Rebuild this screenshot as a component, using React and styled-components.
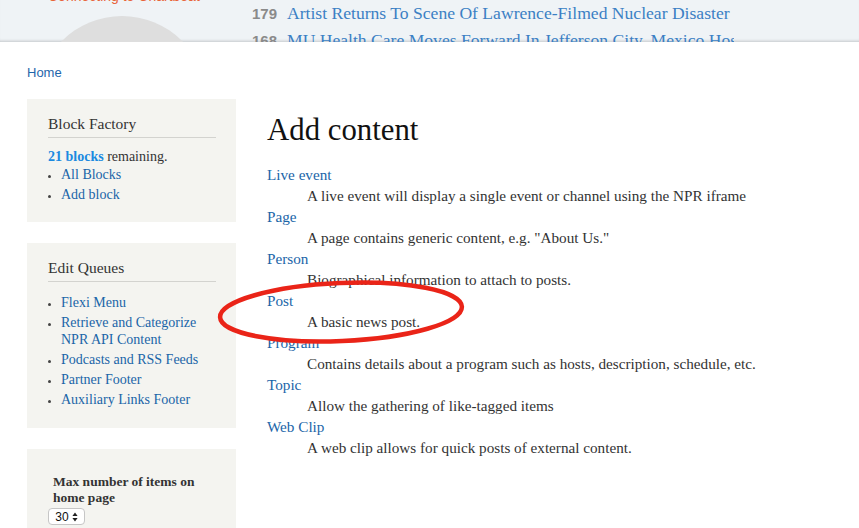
import React from "react";
import styled, { createGlobalStyle } from "styled-components";

const Global = createGlobalStyle`
  html, body { margin: 0; padding: 0; background: #fff; }
  body { font-family: "Liberation Serif", serif; width: 859px; height: 528px; overflow: hidden; }
  * { box-sizing: border-box; }
`;

const Page = styled.div`
  position: relative;
  width: 859px;
  height: 528px;
  overflow: hidden;
`;

const TopStrip = styled.div`
  position: relative;
  height: 42px;
  background: #eff3f6;
  overflow: hidden;
  display: flex;
  box-shadow: inset 0 -3px 3px -2px rgba(0,0,0,0.18);
`;

const LeftTop = styled.div`
  width: 252px;
  flex: none;
  position: relative;
`;

const Chartbeat = styled.div`
  position: absolute;
  left: 48px;
  top: -12px;
  font-family: "Liberation Sans", sans-serif;
  font-size: 14px;
  color: #e8643a;
`;

const Circle = styled.div`
  position: absolute;
  left: 37px;
  top: 16px;
  width: 170px;
  height: 170px;
  border-radius: 50%;
  background: #dedede;
`;

const Rows = styled.div`
  width: 482px;
  overflow: hidden;
  display: flex;
  flex-direction: column;
  padding-top: 3px;
  gap: 6px;
`;

const Row = styled.div`
  display: flex;
  align-items: baseline;
  white-space: nowrap;
  height: 22px;
`;

const Num = styled.span`
  font-family: "Liberation Sans", sans-serif;
  font-weight: bold;
  font-size: 15px;
  color: #8a8a8a;
  width: 35px;
  flex: none;
`;

const RowTitle = styled.span`
  font-family: "Liberation Serif", serif;
  font-size: 17.6px;
  color: #3b7fc4;
`;

const Main = styled.div`
  padding: 0 0 0 27px;
`;

const Crumb = styled.a`
  display: block;
  font-family: "Liberation Sans", sans-serif;
  font-size: 13px;
  color: #1f66ab;
  text-decoration: none;
  margin-top: 23px;
  line-height: 16px;
`;

const Columns = styled.div`
  display: flex;
  gap: 31px;
  margin-top: 18px;
`;

const Sidebar = styled.div`
  width: 209px;
  flex: none;
  display: flex;
  flex-direction: column;
  gap: 21px;
`;

const Block = styled.div`
  background: #f4f4f0;
  padding: ${p => p.$pad || "15px 20px 19px 21px"};
  color: #333;
`;

const BlockTitle = styled.h2`
  margin: 0;
  font-weight: normal;
  font-size: 15.5px;
  line-height: 20px;
  color: #333;
  padding-bottom: 3px;
  border-bottom: 1px solid #d3d3cf;
`;

const Remaining = styled.p`
  margin: 9px 0 0;
  font-size: 14px;
  line-height: 19px;
`;

const Strong = styled.strong`
  color: #1b8ae0;
`;

const List = styled.ul`
  margin: ${p => p.$mt || "0"} 0 0;
  padding-left: 13px;
  font-size: 14px;
  line-height: 17px;
`;

const Item = styled.li`
  margin-bottom: 3px;
  &::marker { color: #444; font-size: 11px; }
  &:last-child { margin-bottom: 0; }
`;

const Link = styled.a`
  color: #1a65a8;
  text-decoration: none;
`;

const Label = styled.div`
  font-weight: bold;
  font-size: 13.5px;
  line-height: 16px;
  color: #333;
  padding-left: 5px;
  padding-top: 19px;
`;

const Select = styled.div`
  margin-top: 2px;
  width: 37px;
  height: 17px;
  border: 1px solid #c6c6c6;
  border-radius: 4px;
  background: #fff;
  font-family: "Liberation Sans", sans-serif;
  font-size: 12px;
  display: flex;
  align-items: center;
  justify-content: center;
  gap: 3px;
  color: #111;
`;

const Content = styled.div`
  position: relative;
  flex: 1;
  padding-top: 13px;
`;

const H1 = styled.h1`
  margin: 0;
  font-weight: normal;
  font-size: 30.8px;
  line-height: 36px;
  color: #111;
`;

const DL = styled.dl`
  margin: 16px 0 0;
  font-size: 15.2px;
  line-height: 21px;
`;

const DT = styled.dt`
  color: #1a65a8;
`;

const DD = styled.dd`
  margin-left: 40px;
  color: #333;
`;

const Ellipse = styled.svg`
  position: absolute;
  left: 212px;
  top: 276px;
  pointer-events: none;
`;

const items = [
  ["Live event", "A live event will display a single event or channel using the NPR iframe"],
  ["Page", 'A page contains generic content, e.g. "About Us."'],
  ["Person", "Biographical information to attach to posts."],
  ["Post", "A basic news post."],
  ["Program", "Contains details about a program such as hosts, description, schedule, etc."],
  ["Topic", "Allow the gathering of like-tagged items"],
  ["Web Clip", "A web clip allows for quick posts of external content."],
];

export default function App() {
  return (
    <Page>
      <Global />
      <TopStrip>
        <LeftTop>
          <Chartbeat>Connecting to Chartbeat</Chartbeat>
          <Circle />
        </LeftTop>
        <Rows>
          <Row><Num>179</Num><RowTitle>Artist Returns To Scene Of Lawrence-Filmed Nuclear Disaster In Kansas</RowTitle></Row>
          <Row><Num>168</Num><RowTitle>MU Health Care Moves Forward In Jefferson City, Mexico Hospital Deals</RowTitle></Row>
        </Rows>
      </TopStrip>
      <Main>
        <Crumb href="#">Home</Crumb>
        <Columns>
          <Sidebar>
            <Block>
              <BlockTitle>Block Factory</BlockTitle>
              <Remaining><Strong>21 blocks</Strong> remaining.</Remaining>
              <List>
                <Item><Link href="#">All Blocks</Link></Item>
                <Item><Link href="#">Add block</Link></Item>
              </List>
            </Block>
            <Block $pad="15px 20px 20px 21px">
              <BlockTitle>Edit Queues</BlockTitle>
              <List $mt="12px">
                <Item><Link href="#">Flexi Menu</Link></Item>
                <Item><Link href="#">Retrieve and Categorize NPR API Content</Link></Item>
                <Item><Link href="#">Podcasts and RSS Feeds</Link></Item>
                <Item><Link href="#">Partner Footer</Link></Item>
                <Item><Link href="#">Auxiliary Links Footer</Link></Item>
              </List>
            </Block>
            <Block $pad="6px 20px 20px 21px">
              <Label>Max number of items on home page</Label>
              <Select>
                <span>30</span>
                <svg width="6" height="10" viewBox="0 0 6 10">
                  <path d="M3 0.5 L5.6 4 H0.4 Z M3 9.5 L5.6 6 H0.4 Z" fill="#222" />
                </svg>
              </Select>
            </Block>
          </Sidebar>
          <Content>
            <H1>Add content</H1>
            <DL>
              {items.map(([t, d]) => (
                <React.Fragment key={t}>
                  <DT><Link href="#">{t}</Link></DT>
                  <DD>{d}</DD>
                </React.Fragment>
              ))}
            </DL>
          </Content>
        </Columns>
      </Main>
      <Ellipse width="260" height="74" viewBox="0 0 260 74">
        <ellipse cx="129" cy="36" rx="121" ry="29" fill="none" stroke="#ea2418" strokeWidth="4.5" transform="rotate(-2.5 129 36)" />
      </Ellipse>
    </Page>
  );
}
